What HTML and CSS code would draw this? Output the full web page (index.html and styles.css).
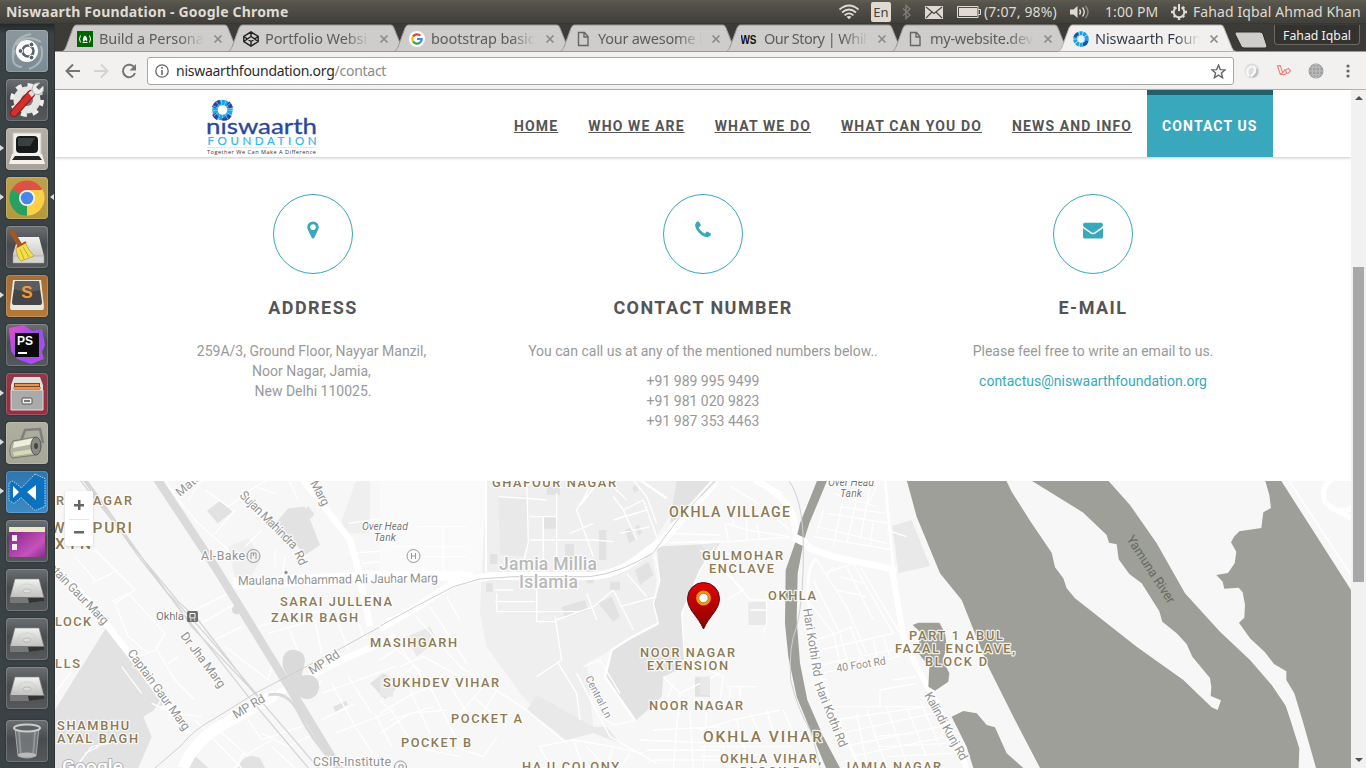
FILE: index.html
```html
<!DOCTYPE html>
<html lang="en">
<head>
<meta charset="utf-8">
<title>Niswaarth Foundation</title>
<link rel="stylesheet" href="styles.css">
</head>
<body>
<svg class="defs" width="0" height="0" aria-hidden="true">
  <defs>
    <linearGradient id="disk" x1="0" y1="0" x2="0" y2="1"><stop offset="0" stop-color="#f2f2f0"/><stop offset="1" stop-color="#bdbdba"/></linearGradient>
    <linearGradient id="purple" x1="0" y1="0" x2="1" y2="1"><stop offset="0" stop-color="#7d1f80"/><stop offset=".7" stop-color="#c552bb"/><stop offset="1" stop-color="#8c2a8a"/></linearGradient>
    <linearGradient id="storm" x1="0" y1="0" x2="1" y2="1"><stop offset="0" stop-color="#e84fc0"/><stop offset=".5" stop-color="#9a4ff0"/><stop offset="1" stop-color="#b44df0"/></linearGradient>
    <linearGradient id="pin" x1="0" y1="0" x2="0" y2="1"><stop offset="0" stop-color="#e00505"/><stop offset="1" stop-color="#8b0000"/></linearGradient>
    <symbol id="close" viewBox="0 0 10 10"><path d="M1.500 1.500l7 7m0-7l-7 7" fill="none" stroke="#8a8a88" stroke-width="1.700"/></symbol>
    <symbol id="doc" viewBox="0 0 16 16"><path d="M3.500 1.500h6l3.500 4v9h-9.500zM9 1.500v4.500h4" fill="none" stroke="#666" stroke-width="1.400"/></symbol>
    <symbol id="drive" viewBox="0 0 42 42">
      <path d="M9 10h24l5 19H4z" fill="url(#disk)" stroke="#888" stroke-width=".6"/>
      <path d="M4 28h34v4l-14 2H4z" fill="#777"/><path d="M22 29h16v3l-15 2z" fill="#333"/>
      <ellipse cx="21" cy="21" rx="9" ry="6" fill="none" stroke="#d0d0ce"/><ellipse cx="21" cy="22" rx="4" ry="2" fill="#dcdcdc" stroke="#b0b0b0" stroke-width=".7"/>
    </symbol>
    <symbol id="tabshape" viewBox="0 0 180 28">
      <path class="tab-fill" d="M0 27.500C2 27 3 25 4 23L11 4Q12.500 1 14 1H163Q165 1 166 4L174 24Q175.500 27.500 178 27.500z"/>
    </symbol>
  </defs>
</svg>

<div class="desktop">
  <header class="panel">
    <span class="window-title">Niswaarth Foundation - Google Chrome</span>
    <div class="tray">
      <svg class="t-wifi" width="22" height="16" viewBox="0 0 22 16"><g fill="none" stroke="#dfdbd2" stroke-width="1.700"><path d="M1.500 5.500Q11-2.500 20.500 5.500"/><path d="M4 8.500Q11 2.500 18 8.500"/><path d="M6.500 11.300Q11 7.500 15.500 11.300"/></g><path d="M8.500 12.800Q11 11 13.500 12.800L11 15.300z" fill="#dfdbd2"/></svg>
      <span class="t-lang">En</span>
      <svg class="t-bt" width="9" height="16" viewBox="0 0 9 16"><path d="M1 4.500l7 6.500-4 3.500V1.500l4 3.500-7 6.500" fill="none" stroke="#7f7d76" stroke-width="1.400"/></svg>
      <svg class="t-mail" width="18" height="13" viewBox="0 0 18 13"><path fill="#dfdbd2" d="M0 0h18v13H0z"/><path d="M1 1l8 6.500L17 1M1 12l6-6m10 6l-6-6" stroke="#4b4943" stroke-width="1.200" fill="none"/></svg>
      <svg class="t-bat" width="24" height="12" viewBox="0 0 24 12"><path d="M.5.500h20.500v11H.500zM21 3.500h2.500v5H21" fill="none" stroke="#dfdbd2"/><path fill="#dfdbd2" d="M2 2h18v8H2z"/></svg>
      <span class="t-pct">(7:07, 98%)</span>
      <svg class="t-snd" width="20" height="14" viewBox="0 0 20 14"><path fill="#dfdbd2" d="M0 4.500h3.500L7.500 1v12L3.500 9.500H0z"/><g fill="none" stroke-width="1.400"><path stroke="#dfdbd2" d="M9.500 4.500q2 2.500 0 5M12.500 2.500q3.500 4.500 0 9"/><path stroke="#8d8a83" d="M15.500 1q5 6 0 12"/></g></svg>
      <span class="t-time">1:00 PM</span>
      <svg class="t-gear" width="16" height="16" viewBox="0 0 16 16"><path d="M5.500 3.300a5.300 5.300 0 1 0 5 0M8 0v7" fill="none" stroke="#dfdbd2" stroke-width="2"/><path d="M2.800 2.800l1.500 1.500M13.200 2.800l-1.500 1.500M0 8h2M14 8h2M2.800 13.200l1.500-1.500M13.200 13.200l-1.500-1.500M8 16v-2" stroke="#dfdbd2" stroke-width="2.400"/></svg>
      <span class="t-user">Fahad Iqbal Ahmad Khan</span>
    </div>
  </header>

  <div class="workspace">
    <nav class="launcher">
      <div class="tile t-dash"><svg viewBox="0 0 42 42"><g fill="none" stroke="#c5cdd0" stroke-opacity=".6"><path d="M7 30Q4 8 25 4M10 15Q20 3 35 12M35 16q5 17-12 23M16 37Q3 36 9 20" stroke-width="2"/></g><circle cx="21" cy="21" r="11" fill="#fff"/><circle cx="22" cy="21" r="5.500" fill="none" stroke="#59636a" stroke-width="2.600"/><g fill="#59636a" stroke="#fff"><circle cx="14.500" cy="21" r="2.400"/><circle cx="25.500" cy="14.500" r="2.400"/><circle cx="25.500" cy="27.500" r="2.400"/></g></svg></div>
      <div class="tile"><svg viewBox="0 0 42 42"><circle cx="21" cy="21" r="14.500" fill="none" stroke="#eee" stroke-width="5" stroke-dasharray="5.700 5.700"/><circle cx="21" cy="21" r="13.500" fill="#e5e5e3"/><circle cx="21" cy="21" r="6" fill="#777"/><path d="M8 34L25 15" stroke="#8e1717" stroke-width="8" stroke-linecap="round"/><path d="M8 34L25 15" stroke="#d3302d" stroke-width="6" stroke-linecap="round"/><path d="M24 16l7-6" stroke="#ddd" stroke-width="5"/><path d="M34 4q-8-1-8 7 2 6 8 4 5-2 3-8l-4 4-3-3z" fill="#eee" stroke="#aaa"/></svg></div>
      <div class="tile t-term running"><svg viewBox="0 0 42 42"><path d="M7 5h28v22H7z" fill="#f3f1e9" stroke="#c9c7be"/><rect x="10" y="8" width="22" height="17" rx="4" fill="#161a1b"/><path d="M12 10h17l-5 8H12z" fill="#394041"/><path d="M6 26h30l3 10H3z" fill="#f4f1e9"/><path d="M9 28h24l3 4H6z" fill="#242424"/></svg></div>
      <div class="tile t-chrome running focused"><svg viewBox="0 0 42 42"><path d="M21 21L5.800 12.300A17.500 17.500 0 0 1 36.200 12.300z" fill="#dd5147"/><path d="M21 21L36.200 12.300A17.500 17.500 0 0 1 21 38.500z" fill="#fdcf46"/><path d="M21 21L21 38.500A17.500 17.500 0 0 1 5.800 12.300z" fill="#27a062"/><path d="M21 13h15.500L29 24z" fill="#fdcf46"/><path d="M14 25l7 4-5 9q-4-1-6-3z" fill="#27a062"/><circle cx="21" cy="21" r="8" fill="#f7f7f7"/><circle cx="21" cy="21" r="6.300" fill="#4a86ea"/></svg></div>
      <div class="tile"><svg viewBox="0 0 42 42"><path d="M12 11h21l5 19v7H7v-9z" fill="url(#disk)"/><path d="M7 30h31v7H7z" fill="#d4d4d2" stroke="#999" stroke-width=".5"/><path d="M6 6l9 15" stroke="#9b5b22" stroke-width="5" stroke-linecap="round"/><path d="M10 22l9-6q3 8 9 14l-13 5q-4-3-5-13z" fill="#f3df4d" stroke="#b39820" stroke-width=".7"/><path d="M11 21l9-5" stroke="#c63b22" stroke-width="2"/><path d="M14 23l4 10m-1-12l6 10" stroke="#c8ad24"/></svg></div>
      <div class="tile t-subl running"><svg viewBox="0 0 42 42"><path d="M7 5h28l3 27q0 3-2 3H6q-2 0-2-3z" fill="#e9e5df"/><path d="M9 6h24l3 21q0 3-2 3H8q-2 0-2-3z" fill="#454545"/><path d="M9 6h24l1 9Q22 19 8 14z" fill="#5d5d5d"/><text x="21" y="23" class="s-mark">S</text></svg></div>
      <div class="tile"><svg viewBox="0 0 42 42"><path d="M3 4l15-3 8 6 10-2 3 16-3 7 2 7-13 5-14-5-6-8z" fill="url(#storm)"/><path d="M9 9h24v24H9z" fill="#0b0b0b"/><text x="11" y="21" class="ps-mark">PS</text><path d="M12 28h9v2h-9z" fill="#fff"/></svg></div>
      <div class="tile t-files running"><svg viewBox="0 0 42 42"><path d="M8 4h26l3 8v24H5V12z" fill="#dededc"/><path d="M8 10h26v7H8z" fill="#78452b"/><path d="M9 11h24v2H9zM7 14h28v2H7z" fill="#e9914e"/><path d="M5 17h32v20H5z" fill="#aaa" stroke="#ddd"/><rect x="16" y="25" width="10" height="6" rx="1" fill="#eee" stroke="#555"/><path d="M18 27h6v2h-6z" fill="#777"/></svg></div>
      <div class="tile t-tweak running"><svg viewBox="0 0 42 42"><path d="M15 19l4-11 15-1 3 14" fill="none" stroke="#7d807c" stroke-width="2.500"/><path d="M7 19l22-4q-3 12 1 18l-24 3q-5-8 1-17z" fill="#b2b3a2" stroke="#7b7b6a"/><path d="M8 20l20-4-1 6-20 4z" fill="#eeeedd"/><path d="M7 30l20-3 1 4-20 3z" fill="#d8d9b8"/><ellipse cx="30" cy="24" rx="5" ry="9" fill="#888a86" stroke="#555"/><ellipse cx="30" cy="24" rx="2" ry="3" fill="#444"/></svg></div>
      <div class="tile t-code running"><svg viewBox="0 0 42 42"><path d="M29 3l10 4.500v28L29 39.500 15 26.500l-7 6-5-3v-18l4-1.500 8.500 7z" fill="#0a72bf" stroke="#d9e8f2" stroke-width=".8" stroke-dasharray="1.500 1"/><path d="M30 14v15l-9-8zM7 15v12l6-6z" fill="#fff"/></svg></div>
      <div class="tile"><svg viewBox="0 0 42 42"><rect x="3" y="7" width="36" height="30" rx="2" fill="url(#purple)"/><path d="M3 7h36v5H3z" fill="#eae7cb"/><path d="M6 15h5v6H6zM6 24h5v6H6z" fill="#f4eef4"/></svg></div>
      <div class="tile"><svg viewBox="0 0 42 42"><use href="#drive"/></svg></div>
      <div class="tile"><svg viewBox="0 0 42 42"><use href="#drive"/></svg></div>
      <div class="tile"><svg viewBox="0 0 42 42"><use href="#drive"/></svg></div>
      <div class="tile t-trash"><svg viewBox="0 0 42 42"><path d="M9 8h24l-3 28q-9 4-18 0z" fill="#8a8e90" fill-opacity=".6" stroke="#b7babb" stroke-width=".8"/><path d="M13 12l2 24M29 12l-2 24" stroke="#a7abac" stroke-opacity=".6" stroke-width="2"/><ellipse cx="21" cy="8" rx="13" ry="3.500" fill="#5b6062" stroke="#ccc" stroke-width="2"/><ellipse cx="21" cy="35" rx="9" ry="2.500" fill="#bbb"/></svg></div>
    </nav>

    <section class="browser">
      <div class="tabstrip">
        <div class="tab"><svg class="tab-bg"><use href="#tabshape"/></svg><svg class="fav" viewBox="0 0 16 16"><path fill="#006400" d="M0 0h16v16H0z"/><path d="M3.500 4.500Q1.500 8 3.500 11.500M12.500 4.500q2 3.500 0 7M5.500 11.500h5" fill="none" stroke="#fff"/><path d="M8 4.500q3 2.500 2 6L8.500 9 7 10.500H6Q5 7 8 4.500z" fill="#fff"/></svg><span class="tab-title">Build a Persona</span><svg class="x"><use href="#close"/></svg></div>
        <div class="tab"><svg class="tab-bg"><use href="#tabshape"/></svg><svg class="fav" viewBox="0 0 16 16"><path d="M8 .8l7.200 4.700v5L8 15.200.8 10.500v-5zM8 .8v4.700M8 15.200v-4.700M.8 5.500L8 10.500l7.200-5M.8 10.500L8 5.500l7.200 5" fill="none" stroke="#222" stroke-width="1.400"/></svg><span class="tab-title">Portfolio Websi</span><svg class="x"><use href="#close"/></svg></div>
        <div class="tab"><svg class="tab-bg"><use href="#tabshape"/></svg><svg class="fav" viewBox="0 0 16 16"><circle cx="8" cy="8" r="8" fill="#fff"/><g fill="none" stroke-width="2.200"><path d="M11.300 4.700A4.700 4.700 0 0 0 4 5.600" stroke="#ea4335"/><path d="M4 5.600a4.700 4.700 0 0 0 0 4.800" stroke="#fbbc05"/><path d="M4 10.400a4.700 4.700 0 0 0 7 1.200" stroke="#34a853"/><path d="M11 11.600Q12.700 10 12.700 8H8" stroke="#4285f4"/></g></svg><span class="tab-title">bootstrap basic</span><svg class="x"><use href="#close"/></svg></div>
        <div class="tab"><svg class="tab-bg"><use href="#tabshape"/></svg><svg class="fav"><use href="#doc"/></svg><span class="tab-title narrow">Your awesome l</span><svg class="x"><use href="#close"/></svg></div>
        <div class="tab"><svg class="tab-bg"><use href="#tabshape"/></svg><svg class="fav" viewBox="0 0 16 16"><text x="-.5" y="12.500" class="ws" textLength="16" lengthAdjust="spacingAndGlyphs">WS</text></svg><span class="tab-title story">Our Story | Whil</span><svg class="x"><use href="#close"/></svg></div>
        <div class="tab"><svg class="tab-bg"><use href="#tabshape"/></svg><svg class="fav"><use href="#doc"/></svg><span class="tab-title narrow">my-website.dev</span><svg class="x"><use href="#close"/></svg></div>
        <div class="tab active"><svg class="tab-bg"><use href="#tabshape"/></svg><svg class="fav" viewBox="0 0 16 16"><circle cx="8" cy="8" r="5.800" fill="#e3f4fc" stroke="#1d9ee8" stroke-width="4" stroke-dasharray="3 .6"/><path d="M2 6a6 6 0 0 1 3-3.500M14 10a6 6 0 0 1-4 4" stroke="#1f4fa3" stroke-width="3" fill="none"/></svg><span class="tab-title">Niswaarth Foun</span><svg class="x"><use href="#close"/></svg></div>
        <svg class="newtab" width="34" height="18" viewBox="0 0 34 18"><path d="M2 1h24q2 0 3 2l4 12q0 2-2 2H10q-2 0-3-2L1 3q0-2 1-2z" fill="#cfcdcb" stroke="#2c2b28" stroke-width="1"/></svg>
        <span class="profile">Fahad Iqbal</span>
      </div>

      <div class="toolbar">
        <svg class="tb" viewBox="0 0 16 16"><path d="M15 8H2M8 1.500L1.500 8 8 14.500" fill="none" stroke="#757575" stroke-width="2"/></svg>
        <svg class="tb" viewBox="0 0 16 16"><path d="M1 8h13M8 1.500L14.500 8 8 14.500" fill="none" stroke="#d4d3d2" stroke-width="2"/></svg>
        <svg class="tb" viewBox="0 0 16 16"><path d="M13.600 5A6.200 6.200 0 1 0 14 10" fill="none" stroke="#757575" stroke-width="2"/><path d="M15 1v6.500H8.500z" fill="#757575"/></svg>
        <div class="omnibox">
          <svg class="info" viewBox="0 0 14 14"><circle cx="7" cy="7" r="6.200" fill="none" stroke="#666" stroke-width="1.300"/><path d="M7 6v5M7 3v1.700" stroke="#666" stroke-width="1.600"/></svg>
          <span class="url">niswaarthfoundation.org<span class="path">/contact</span></span>
          <svg class="star" viewBox="0 0 14 14"><path d="M7 1l1.700 4.200 4.500.3-3.500 2.900 1.100 4.400L7 10.400l-3.800 2.400 1.100-4.400L.8 5.500l4.500-.3z" fill="none" stroke="#666" stroke-width="1.300"/></svg>
        </div>
        <div class="exts">
          <svg width="16" height="16" viewBox="0 0 16 16"><circle cx="8" cy="8" r="7.500" fill="#dcdcdc"/><path d="M9 3q5 5-2 10M5 13Q0 7 8 3" stroke="#f7f7f7" stroke-width="2.500" fill="none"/><path d="M9 14q5-2 4-8" stroke="#bbb" stroke-width="1.500" fill="none"/></svg>
          <svg width="16" height="12" viewBox="0 0 17 14"><path d="M1 1l3-.5L7 9l-3 1.500zM4 10.500q5 2 8-1L10 6l4-2 2 3-3 3M7 9l3-4" fill="none" stroke="#f4766b" stroke-width="1.200"/></svg>
          <svg width="16" height="16" viewBox="0 0 17 17"><circle cx="8.500" cy="8.500" r="8" fill="#a0a0a0"/><path d="M1 8.500h15M8.500 1v15M2.500 4.500h12M2.500 12.500h12" stroke="#c0c0c0" fill="none"/><ellipse cx="8.500" cy="8.500" rx="4" ry="7.500" fill="none" stroke="#c0c0c0"/></svg>
          <svg class="dots" width="4" height="14" viewBox="0 0 4 14"><g fill="#666"><circle cx="2" cy="2" r="1.600"/><circle cx="2" cy="7" r="1.600"/><circle cx="2" cy="12" r="1.600"/></g></svg>
        </div>
      </div>

      <div class="viewport">
        <main class="page">
          <div class="site-header">
            <svg class="logo" width="114" height="60" viewBox="205 97 114 60">
              <circle cx="222.500" cy="110" r="7.600" fill="none" stroke="#1ea7e8" stroke-width="5.500"/>
              <path d="M214 107.500a8.500 8.500 0 0 1 6-5.700M228 103a9 9 0 0 1 3 5M230 115a9 9 0 0 1-5 4M214 114a9 9 0 0 0 4 4.500" fill="none" stroke="#28489b" stroke-width="4.200"/>
              <circle cx="222.500" cy="110" r="7.600" fill="none" stroke="#fff" stroke-opacity=".6" stroke-width="5.500" stroke-dasharray=".6 3.200"/>
              <text x="206" y="134" class="lg-name" textLength="111" lengthAdjust="spacingAndGlyphs">niswaarth</text>
              <text x="207.500" y="144.800" class="lg-sub" textLength="109">FOUNDATION</text>
              <path d="M207 147.500h109" stroke="#dfeaf3"/>
              <text x="207" y="153.500" class="lg-tag" textLength="109">Together We Can Make A Difference</text>
            </svg>
            <nav class="menu">
              <a href="#">HOME</a><a href="#">WHO WE ARE</a><a href="#">WHAT WE DO</a><a href="#">WHAT CAN YOU DO</a><a href="#">NEWS AND INFO</a><a href="#" class="current">CONTACT US</a>
            </nav>
          </div>

          <section class="contacts">
            <article class="card">
              <div class="ring"><svg width="20" height="20" viewBox="0 0 1792 1792"><path d="M1152 640q0-106-75-181t-181-75-181 75-75 181 75 181 181 75 181-75 75-181zm256 0q0 109-33 179l-364 774q-16 33-47.500 52t-67.500 19-67.500-19-46.500-52l-365-774q-33-70-33-179 0-212 150-362t362-150 362 150 150 362z"/></svg></div>
              <h4>ADDRESS</h4>
              <p><span class="hang">259A/3, Ground Floor, Nayyar Manzil,</span><br><span class="hang">Noor Nagar, Jamia,</span><br>New Delhi 110025.</p>
            </article>
            <article class="card">
              <div class="ring"><svg width="20" height="20" viewBox="0 0 1792 1792"><path d="M1600 1240q0 27-10 70.500t-21 68.500q-21 50-122 106-94 51-186 51-27 0-53-3.500t-57.500-12.500-47-14.500-55.500-20.500-49-18q-98-35-175-83-127-79-264-216t-216-264q-48-77-83-175-3-9-18-49t-20.500-55.500-14.500-47-12.500-57.500-3.500-53q0-92 51-186 56-101 106-122 25-11 68.500-21t70.500-10q14 0 21 3 18 6 53 76 11 19 30 54t35 63.500 31 53.500q3 4 17.500 25t21.500 35.500 7 28.500q0 20-28.500 50t-62 55-62 53-28.500 46q0 9 5 22.500t8.500 20.500 14 24 11.500 19q76 137 174 235t235 174q2 1 19 11.500t24 14 20.500 8.500 22.500 5q18 0 46-28.500t53-62 55-62 50-28.500q14 0 28.500 7t35.500 21.500 25 17.500q25 15 53.500 31t63.500 35 54 30q70 35 76 53 3 7 3 21z"/></svg></div>
              <h4>CONTACT NUMBER</h4>
              <p>You can call us at any of the mentioned numbers below..</p>
              <p>+91 989 995 9499<br>+91 981 020 9823<br>+91 987 353 4463</p>
            </article>
            <article class="card">
              <div class="ring"><svg width="20" height="20" viewBox="0 0 1792 1792"><path d="M1792 710v794q0 66-47 113t-113 47h-1472q-66 0-113-47t-47-113v-794q44 49 101 87 362 246 497 345 57 42 92.500 65.500t94.500 48 110 24.500h2q51 0 110-24.500t94.500-48 92.500-65.500q170-123 498-345 57-39 100-87zm0-294q0 79-49 151t-122 123q-376 261-468 325-10 7-42.500 31t-54 38.500-52 32.500-57.500 27-50 9h-2q-23 0-50-9t-57.500-27-52-32.500-54-38.500-42.500-31q-91-64-262-182.500t-205-142.500q-62-42-117-115.500t-55-136.500q0-78 41.500-130t118.500-52h1472q65 0 112.500 47t47.500 113z"/></svg></div>
              <h4>E-MAIL</h4>
              <p>Please feel free to write an email to us.</p>
              <p><a href="#">contactus@niswaarthfoundation.org</a></p>
            </article>
          </section>

          <div class="map">
            <svg width="1296" height="287" viewBox="55 481 1296 287">
              <!-- west: rail corridor, ring road, parks -->
              <g transform="translate(55 480) scale(.33333)">
                <path class="park" d="M155 440L320 640 330 670 265 710 290 770 250 864H0V690zM495 62L532 95 488 130 456 92zM700 85L750 80 795 195 750 225 665 125zM760 78l18 25-12 14-18-25zM945 610l40-30 35 20v30l-30 28zM835 680l38-18 6 12-38 22zM380 864q10-40 30-46l50 46zM550 864q15-50 65-30l15 30z"/>
                <path class="campus" d="M905 0h40v160H870l-10-40zM520 200l60-25 40 60-30 50-50 10z"/>
                <path class="minor" d="M0 130L120 210 240 330 180 370 220 470 280 520M170 365L220 340 330 460 300 510 250 530M110 310L190 270M60 230L120 300M330 0L370 60 430 130 520 210M440 0L400 60M450 30L520 80 600 20M540 90L480 160M590 60L690 160 720 230M620 150L570 200M660 40L600 20 640 0M700 0L730 60M400 400L520 340M440 430L560 360M480 480L560 440M510 500L640 600M560 400L640 520 660 570M640 600L650 560M610 440L760 400 900 370M640 460L780 420M780 420L800 520M700 440L740 540M850 430L880 510M900 400L930 480M660 260V210M680 300L690 230M340 550L370 530M200 560L260 640M300 500L360 600 420 660M290 670L360 700 440 710M380 710L370 740M330 640L300 690M0 640L60 560M0 560L50 540M800 640L1020 560M830 610L900 740M880 590L950 700M800 720L900 670M840 760L1020 690M900 740L960 830M960 700L1010 800M780 640L800 600M420 720L560 864M480 740L580 830M560 690L620 780 740 740M570 815L540 864M580 820L650 780M620 760L700 800 780 760M650 800L720 864M880 130L1020 110M880 220L1020 210M920 250L1020 240M60 864L110 800 160 790M90 820L130 800"/>
                <path class="road" stroke-width="20" d="M0 265Q60 310 120 390L230 530 400 760"/>
                <path class="road" stroke-width="34" d="M535 310L1020 288"/>
                <path class="road" stroke-width="20" d="M745 0L885 180 910 270 945 440"/>
                <path class="road" stroke-width="34" d="M385 864Q420 775 520 725L660 645"/>
                <path class="road" stroke-width="20" d="M650 650L840 550 1020 470"/>
                <path class="rail" d="M75 0L250 220 370 365 430 420 590 630 790 864M85 0L255 235 580 650 760 864M90 0L310 300 410 440 600 640M95 0L330 330 450 460 620 660"/>
                <path class="ring-rd" d="M305 -5L480 260 640 520 720 650 860 880"/>
                <path class="loop" d="M640 645Q700 630 735 705T850 864"/>
                <path class="loopf" d="M683 545q0-36 34-36 34 4 33 34l-10 44 20-3q32 4 33 36-6 38-40 37-22-2-34-26l-25-50q-12-14-11-36zM545 375a14 14 0 1 0 .1 0z"/>
                <path class="edge" d="M300 864L380 795Q420 745 480 715L600 640 830 520 1020 416"/>
              </g>
              <!-- centre: university campus and village -->
              <g transform="translate(380 480) scale(.33333)">
                <path class="pale" d="M0 0H318V275H0z"/>
                <path class="campus" d="M320 0H890L900 60 810 200 830 300 820 370 835 430 750 475 695 510 620 550 640 740 550 780 420 640 320 500 300 400z"/>
                <path class="park" d="M890 0H1000L930 90 870 130zM830 200L1020 190 960 270 905 400 915 560 850 590 845 650 770 720 675 590 695 510 750 475 835 430 820 370 840 300zM490 108h37v38h-37zM555 192h27v55h-27zM657 150h22v90h-22zM620 250h22v60h-22zM765 270l40-25 15 40-40 30zM655 370l40-20 25 60-20 15zM545 380l70-20 10 30-70 25zM690 305h30v26h-30zM330 222h22v30h-22zM318 310h20v25h-20zM500 20h40v25h-40zM765 15l12 15-14 8-6-14zM735 150l20-10 12 40-20 10zM765 140l12-6 10 24-12 8zM945 590h45v60h-45z"/>
                <path class="park2" d="M355 52L440 48 446 185 430 230 360 225zM470 645L440 690 560 780 640 760 720 790 680 740 640 740zM80 470L150 440 170 480 110 530zM0 590l40 20v40H0z"/>
                <path class="minor" d="M440 0L445 185 430 250M530 40V280M450 110H530M355 50L440 55 500 60M490 108V240M450 180H640L700 185M570 160L640 130M600 70L590 90 640 230M600 75L640 0M700 50L730 90 790 60 830 170M730 90L770 180M700 120L800 90M720 160L810 140M760 0L800 50 830 130M680 0L740 60M350 340V395H600M345 365H465M470 330V425H530M345 330H400M525 410L545 540 470 590M535 550L590 640 600 720M530 420L640 380 700 330M620 340L650 420M700 330L760 450M740 280L800 350M720 380L830 350M610 560L660 540 720 640M590 580L690 770 830 850M695 510L675 590 765 722M765 722L700 735 680 720M825 230L840 300 820 370 835 430 750 475 695 510M1010 190L960 270 905 400 915 560M870 160L1020 165M0 540L60 500 160 640M20 480L150 600 210 580M60 560L130 530 260 600M100 400L240 560M150 380L260 550M200 350L240 420M20 620L100 560M0 700L100 640 250 590M30 720L160 680M0 760L90 700 200 690M90 630L150 760M150 620L230 780M200 600L280 730M240 560L440 690 560 790M280 650L380 740M310 620L240 700M350 630L290 730M100 800L240 830M220 800L310 830 350 770M0 660L40 700 90 780M60 230H260M30 200H260M110 140H260M190 140V280M130 240V280M475 800L580 780 700 800 790 820M480 800L500 840M580 780L610 864M620 800L680 864M700 800L680 864M750 820L720 864M780 780L1020 790M800 810H1020M820 840H1020M850 590L900 640 1020 580M880 610L860 660 900 700M900 640L890 740 880 864M930 700L940 864M980 680L970 864M820 750L1020 740"/>
                <path class="road" stroke-width="7" d="M660 0L600 75M780 0L860 55M835 430L750 475 695 510 675 590 765 722"/>
                <path class="road" stroke-width="30" d="M0 288H180L280 290"/>
                <path class="road" stroke-width="24" d="M0 445L120 375 230 305 330 288H630Q720 285 800 215L850 180 1010 0"/>
                <path class="edge" d="M0 438L110 378 220 320 300 297 400 290H630Q720 280 820 218L900 110 1010 0"/>
                <path class="road" stroke-width="6" d="M870 188L1020 184M318 0V275"/>
              </g>
              <!-- east: canal, enclave, ponds -->
              <g transform="translate(700 480) scale(.33333)">
                <path class="park2" d="M577 137L635 120 690 258 595 280zM145 365h55v70h-55zM0 590h30v55H0zM0 190l55 0-35 30z"/>
                <path class="minor" d="M80 130L140 150 270 170M75 130L85 180M100 60V140M140 110V180M170 130L180 180M0 190L270 172M0 210L70 270 130 330 80 360M60 240L100 300 150 360H200V430M150 390H200M200 430L190 460M90 20L160 60 270 150M180 0L250 40M400 40L530 80M380 100L570 130M350 140L560 190M370 90L350 160M430 50L400 200M470 60L440 190M510 20L480 180M540 0L500 80M520 120L510 200M560 150L620 170M340 170L580 210M420 80L560 100M350 240L440 380 500 520M370 280L460 250 580 460M400 260L380 290M440 260L520 420M480 260L600 460M340 300L420 460 440 540M330 370L400 460M420 290L490 310M410 330L500 350M350 480L460 440M360 510L580 460M400 460L420 550M450 440L490 540M340 560L620 500M360 580L560 540 620 520M520 480L540 560M550 470L570 530M540 630L650 610M540 630V680M580 600L650 590M380 680H660M400 720L680 680M420 760L700 700M430 800L720 740M450 830L740 770M500 690L560 864M560 680L620 850M620 680L680 830M660 660L720 800M470 700L500 850M520 770L640 760M0 560L70 590 60 660M80 620H170M90 625V680M120 620V680M0 750L100 720 240 690M150 700L180 760M200 690L220 760M250 690L280 760M60 740L80 864M110 720L150 864M0 800H280M0 830L310 820M380 600L350 580M540 800L740 790M560 830L760 820"/>
                <path class="road" stroke-width="20" d="M165 0Q260 50 280 110L290 165 330 205 400 230 590 270"/>
                <path class="road" stroke-width="18" d="M575 265L595 380 610 470 650 560 700 650 800 864"/>
                <path class="road" stroke-width="8" d="M555 0L580 265M350 235Q320 260 325 340L330 500 400 690 480 864"/>
                <path class="water" d="M352 0H382L328 130 312 180 293 280 290 420 300 550 322 660 370 770 420 864H378L335 760 290 650 265 530 255 430 257 270 285 190 300 130z"/>
                <path class="road" stroke-width="24" d="M278 170L320 190"/>
                <path class="edge" d="M265 0Q310 60 310 200 312 350 290 440 265 500 272 600 290 680 330 750 345 790 360 864M0 50L45 0"/>
                <path class="water" d="M638 435L655 428 718 428 735 458 740 500 728 540 748 580 745 605 705 632 685 620 688 560 655 520 660 455zM755 710L790 693 830 700 860 735 885 742 920 820 970 864H820L800 800z"/>
                <path class="water" d="M620 0L650 110 720 280 785 360 865 560 945 720 1020 864H2100V0z"/>
              </g>
              <!-- river islands and far bank -->
              <g transform="translate(1030 480) scale(.33333)">
                <path class="land" d="M-72 0H0L10 5 160 98 230 165 237 188 260 193 266 238 298 282 335 310 388 394 397 425 440 460 470 492 487 530 540 594 544 622 542 648 573 661 563 690 545 682 460 600 320 500 135 355 110 325 100 295 75 262 65 218 0 122-55 35zM233 0L300 75 380 190 465 340 570 455 660 540 725 615 767 677 782 722 808 805 806 864H858L820 730 793 640 769 600V574L732 552 705 517 660 475 627 428 643 413 645 375 638 337 626 323 583 326 578 305 559 285 594 279 614 250 619 215 603 187 612 170 628 154 694 144 700 97 723 84 718 45 705 0zM752 0L963 330V0zM0 810L27 864H0z"/>
                <path class="road" stroke-width="5" d="M775 0L963 285"/>
                <path class="road" stroke-width="16" d="M905 0Q870 20 885 65 920 105 965 85M900 80L965 115"/>
              </g>

              <g class="brown" transform="translate(0 -.3)">
                <text x="56" y="505.500">R</text><text x="93" y="505.500" textLength="39">AGAR</text>
                <text x="51" y="533.500" class="b15">W</text><text x="92.500" y="533.500" class="b15" textLength="39.500">PURI</text>
                <text x="55" y="549.500" class="b15" textLength="36">XTN</text>
                <text x="55" y="626.500" textLength="36">LOCK</text>
                <text x="55" y="668.500" textLength="25">LLS</text>
                <text x="57" y="730.500" textLength="72">SHAMBHU</text><text x="57" y="743.500" textLength="81">AYAL BAGH</text>
                <text x="280" y="606.500" textLength="112">SARAI JULLENA</text><text x="271" y="622.500" textLength="87">ZAKIR BAGH</text>
                <text x="370" y="647.500" textLength="87">MASIHGARH</text>
                <text x="383" y="687.500" textLength="116">SUKHDEV VIHAR</text>
                <text x="451" y="723.500" textLength="71">POCKET A</text><text x="401" y="747.500" textLength="70">POCKET B</text>
                <text x="492" y="487.500" textLength="124">GHAFOUR NAGAR</text>
                <text x="522" y="771.500" textLength="97">HAJI COLONY</text>
                <text x="669" y="517.500" class="b14" textLength="121">OKHLA VILLAGE</text>
                <text x="702" y="560.500" textLength="81">GULMOHAR</text><text x="709" y="573.500" textLength="65">ENCLAVE</text>
                <text x="768" y="600.500" textLength="48">OKHLA</text>
                <text x="640" y="657.500" textLength="95">NOOR NAGAR</text><text x="647" y="670.500" textLength="81">EXTENSION</text>
                <text x="649" y="710.500" textLength="94">NOOR NAGAR</text>
                <text x="703" y="742.500" class="b15" textLength="119">OKHLA VIHAR</text>
                <text x="720" y="763.500" textLength="101">OKHLA VIHAR,</text><text x="740" y="776" textLength="61">BLOCK D</text>
                <text x="843" y="771.500" textLength="98">JAMIA NAGAR</text>
                <text x="909" y="640.500" textLength="94">PART 1 ABUL</text><text x="895" y="653.500" textLength="120">FAZAL ENCLAVE,</text><text x="925" y="666.500" textLength="62">BLOCK D</text>
              </g>
              <g class="grey">
                <text x="201" y="559.500" textLength="44">Al-Bake</text>
                <text x="238" y="585" textLength="200" transform="rotate(-.8 238 585)">Maulana Mohammad Ali Jauhar Marg</text>
                <text x="156" y="620" class="dk" textLength="28">Okhla</text>
                <text x="313" y="765.500" textLength="78">CSIR-Institute</text>
                <text transform="translate(180 497) rotate(-40)">Mate</text>
                <text transform="translate(239 496) rotate(45)" textLength="76">Sujan Mahindra</text><text transform="translate(294 553) rotate(66)">Rd</text>
                <text transform="translate(310 483) rotate(62)" textLength="27">Marg</text>
                <text transform="translate(48 568) rotate(46)" textLength="80">ptain Gaur Marg</text>
                <text transform="translate(127 653) rotate(54)" textLength="97">Captain Gaur Marg</text>
                <text transform="translate(180 636) rotate(53)" textLength="66">Dr Jha Marg</text>
                <text transform="translate(236 719) rotate(-31)" textLength="35">MP Rd</text><text transform="translate(312 675) rotate(-33)" textLength="34">MP Rd</text>
                <text transform="translate(585 678) rotate(63)" class="s10" textLength="46">Central Ln</text>
                <text transform="translate(803 609) rotate(81)" textLength="69">Hari Kothi Rd</text><text transform="translate(814 684) rotate(68)" textLength="69">Hari Kothi Rd</text>
                <text transform="translate(837 672) rotate(-9)" class="s11" textLength="50">40 Foot Rd</text>
                <text transform="translate(924 695) rotate(61)" textLength="76">Kalindi Kunj Rd</text>
                <text transform="translate(1126 539) rotate(57)" class="river" textLength="78">Yamuna River</text>
                <text x="499" y="570" class="uni" textLength="98">Jamia Millia</text><text x="519" y="588" class="uni" textLength="59">Islamia</text>
              </g>
              <g class="ital">
                <text x="362" y="529.500" textLength="46">Over Head</text><text x="374" y="541" textLength="22">Tank</text>
                <text x="828" y="485.500" textLength="46">Over Head</text><text x="840" y="497" textLength="22">Tank</text>
              </g>
              <g class="poi">
                <circle cx="253.500" cy="556" r="6.500"/><path d="M251 553v6M253.500 553v3M256 553v6M251 553h5"/>
                <circle cx="413.500" cy="556" r="6.500"/><path d="M411.500 553v6M415.500 553v6M411.500 556h4"/>
                <circle cx="400.500" cy="767" r="6"/><path d="M399 765h4v4h-4z"/>
                <circle cx="286" cy="572.500" r="1.300" fill="#888"/>
              </g>
              <rect x="187" y="611" width="11" height="11" rx="1.500" fill="#6f6f6f"/><path d="M190 613.500h5v4.500h-5zM190 620h1.500M194 620h1.500" fill="none" stroke="#fff"/>
              <text x="62" y="773" class="goog" textLength="61">Google</text>
              <path d="M703.500 629C698 616 687.500 610 687.500 598.500A16 16 0 0 1 719.500 598.500C719.500 610 709 616 703.500 629z" fill="url(#pin)" stroke="#521010"/>
              <circle cx="703.500" cy="598" r="6" fill="#fff" stroke="#f39a0b" stroke-width="2.800"/><circle cx="703.500" cy="598" r="4.700" fill="none" stroke="#8d5a22" stroke-width=".6"/>
            </svg>
            <div class="zoom"><button class="zbtn plus"></button><button class="zbtn"></button></div>
          </div>
        </main>
        <div class="scrollbar"><span class="arr up"></span><span class="thumb"></span><span class="arr down"></span></div>
      </div>
    </section>
  </div>
</div>
</body>
</html>
```
FILE: styles.css
```css
* { box-sizing: border-box; }
body { margin: 0; overflow: hidden; font-family: Roboto, "Liberation Sans", sans-serif; }
.defs { display: block; position: absolute; }
.desktop { width: 1366px; height: 768px; display: flex; flex-direction: column; overflow: hidden; background: #3c3b37; }
svg { flex: none; display: block; }
text { white-space: pre; }

/* top panel */
.panel { height: 24px; flex: none; display: flex; align-items: center; justify-content: space-between; padding: 0 6px; background: linear-gradient(#5f5c51, #55534b 15%, #403f3a 95%, #33322e); color: #dfdbd2; font: 14.5px/24px "Noto Sans", sans-serif; white-space: nowrap; }
.window-title { font-weight: 700; font-size: 14px; letter-spacing: .19px; }
.tray { display: flex; align-items: center; height: 24px; }
.t-lang { width: 20px; height: 20px; margin: 0 11px; background: #dfdbd2; border-radius: 2px; color: #45433d; font-size: 13px; line-height: 20px; text-align: center; }
.t-mail { margin: 0 14px; }
.t-pct { width: 89px; padding-left: 3px; font-size: 14px; letter-spacing: .15px; }
.t-time { width: 66px; margin-left: 15px; font-size: 14px; letter-spacing: .1px; }
.t-user { width: 167px; margin-left: 6px; font-size: 14px; letter-spacing: .1px; }

/* launcher */
.workspace { flex: 1; display: flex; min-height: 0; }
.launcher { width: 55px; flex: none; padding: 6px 0 0 6px; display: flex; flex-direction: column; gap: 7px; background: linear-gradient(#23282b, #3b4245 10px, #3b4245); border-right: 1px solid #2e3335; }
.tile { position: relative; width: 42px; height: 42px; flex: none; border-radius: 4px; background: linear-gradient(#6b6f71, #484c4e 45%, #55595b); box-shadow: inset 0 0 0 1px rgba(255,255,255,.18), 0 0 2px #222; }
.tile svg { width: 42px; height: 42px; }
.t-dash { background: linear-gradient(#8b979d, #7b8b93); }
.t-term { background: linear-gradient(#b5b0a7, #a7a299); }
.t-chrome { background: linear-gradient(#bfa04b, #b2993e); }
.t-subl { background: linear-gradient(#a56d35, #b57937); }
.t-files { background: linear-gradient(#8f3948, #93303f); }
.t-tweak { background: linear-gradient(#aeafa0, #a6a796); }
.t-code { background: linear-gradient(#2f76ae, #3d8ac5); }
.t-trash { margin-top: 4px; }
.running::before { content: ""; position: absolute; left: -6px; top: 17px; border: 3px solid transparent; border-left: 4px solid #dcdcdc; border-right: 0; }
.focused::after { content: ""; position: absolute; right: -6px; top: 17px; border: 3px solid transparent; border-right: 4px solid #dcdcdc; border-left: 0; }
.s-mark { font: 700 17px "Liberation Sans", sans-serif; fill: #f79a3e; text-anchor: middle; }
.ps-mark { font: 700 12px "Liberation Sans", sans-serif; fill: #fff; }

/* browser chrome */
.browser { flex: 1; display: flex; flex-direction: column; min-width: 0; }
.tabstrip { height: 28px; flex: none; display: flex; padding-left: 7px; background: #3c3b37; font: 14.5px/28px "Noto Sans", sans-serif; border-bottom: 1px solid #999; }
.tab { position: relative; width: 166px; flex: none; display: flex; align-items: center; padding-left: 15px; height: 29px; color: #5c5c5a; z-index: 1; }
.tab.active { z-index: 2; color: #333c4c; }
.tab-bg { position: absolute; left: 0; top: 0; width: 180px; height: 28px; }
.tab-fill { fill: #cfcdcb; stroke: #989795; stroke-width: 1; }
.tab.active .tab-bg { filter: brightness(1.17); }
.fav, .tab-title, .x { position: relative; }
.fav { width: 16px; height: 16px; }
.tab-title { width: 105px; height: 28px; margin: -2px 0 0 6px; overflow: hidden; white-space: nowrap; letter-spacing: -.1px; -webkit-mask-image: linear-gradient(90deg, #000 80px, transparent 105px); mask-image: linear-gradient(90deg, #000 80px, transparent 105px); }
.tab-title.narrow { padding-left: 1px; letter-spacing: -.25px; }
.tab-title.story { padding-left: 1px; letter-spacing: -.55px; }
.x { width: 10px; height: 10px; margin-left: 9px; }
.ws { font: 700 12px "Liberation Sans", sans-serif; fill: #111; }
.newtab { margin: 7px 0 0 10px; }
.profile { width: 86px; height: 20px; margin: 1px 0 0 6px; border: 1px solid #6b6a65; border-top: 0; border-radius: 0 0 4px 4px; background: #33322e; color: #f2f1f0; font-size: 12.3px; line-height: 21px; text-align: center; white-space: nowrap; }
.toolbar { height: 38px; flex: none; display: flex; align-items: center; gap: 12px; padding: 2px 14px 1px 10px; background: #f2f1f0; border-bottom: 1px solid #b6b4b1; }
.tb { width: 16px; height: 16px; }
.omnibox { width: 1087px; height: 28px; margin: 0 0 0 -2px; flex: none; display: flex; align-items: center; padding: 0 7px; border: 1px solid #a8a7a5; border-radius: 3px; background: #fff; font: 14px/26px "Noto Sans", sans-serif; color: #2c2c2c; }
.info { width: 14px; height: 14px; }
.url { flex: 1; margin-left: 7px; letter-spacing: -.26px; }
.path { color: #8a8a8a; }
.star { width: 15px; height: 15px; }
.exts { flex: 1; display: flex; align-items: center; gap: 16px; margin-left: -2px; padding-right: 2px; }
.dots { margin-left: auto; }

/* page */
.viewport { flex: 1; display: flex; min-height: 0; }
.page { width: 1296px; flex: none; display: flex; flex-direction: column; background: #fff; }
.site-header { height: 67px; flex: none; display: flex; justify-content: space-between; padding: 0 78px 0 150px; box-shadow: 0 1px 3px rgba(0,0,0,.22); }
.logo { margin-top: 7px; }
.lg-name { font: 400 22px Lato, sans-serif; fill: #28489b; stroke: #28489b; stroke-width: .3px; }
.lg-sub { font: 400 11.5px Lato, sans-serif; fill: #2cb8f3; stroke: #2cb8f3; stroke-width: .2px; }
.lg-tag { font: 400 5.6px "Open Sans", sans-serif; fill: #333; }
.menu { display: flex; }
.menu a { padding: 0 15px; font-size: 14px; font-weight: 700; line-height: 72px; letter-spacing: 1.13px; color: #555; white-space: nowrap; text-underline-offset: 1px; }
.menu .current { width: 126px; border-top: 5px solid #225f6b; background: #39a7bc; color: #fff; line-height: 62px; text-decoration: none; }
.contacts { height: 324px; flex: none; display: flex; justify-content: center; padding-top: 37px; }
.card { width: 390px; display: flex; flex-direction: column; align-items: center; text-align: center; font-size: 14px; line-height: 20px; color: #999; }
.ring { width: 80px; height: 80px; border: 1px solid #39a7bc; border-radius: 50%; display: flex; justify-content: center; padding-top: 25px; fill: #39a7bc; }
.card h4 { margin: 24px 0 23px; font-size: 18px; line-height: 20px; font-weight: 700; letter-spacing: 1.45px; color: #555; }
.card p { margin: 0 0 10px; }
.hang { padding-right: 3px; }
.card a { color: #39a7bc; text-decoration: none; }

/* map */
.map { position: relative; height: 287px; background: #f7f7f7; overflow: hidden; }
.park { fill: #e2e2e2; }
.park2 { fill: #e9e9e9; }
.campus { fill: #efefef; }
.pale { fill: #fafafa; }
.land { fill: #f7f7f7; }
.water { fill: #9e9f98; }
.minor { fill: none; stroke: #fff; stroke-width: 4; stroke-linejoin: round; }
.road { fill: none; stroke: #fff; stroke-linejoin: round; }
.rail { fill: none; stroke: #d6d6d6; stroke-width: 4; }
.ring-rd { fill: none; stroke: #dadada; stroke-width: 25; }
.loop { fill: none; stroke: #dadada; stroke-width: 9; }
.loopf { fill: #dadada; }
.edge { fill: none; stroke: #cfcfcf; stroke-width: 3; }
.map text { font-family: Roboto, sans-serif; stroke: #fff; stroke-opacity: .85; stroke-width: 2.5px; paint-order: stroke; stroke-linejoin: round; }
.brown text { font-size: 12.8px; font-weight: 500; fill: #8d7a54; }
.brown .b14 { font-size: 14.2px; }
.brown .b15 { font-size: 15.5px; }
.grey text { font-size: 12.4px; fill: #939393; }
.grey .dk { fill: #777; font-size: 11.5px; }
.grey .s10 { font-size: 10.5px; }
.grey .s11 { font-size: 10.8px; }
.grey .uni { font-size: 17.5px; font-weight: 500; fill: #b9b9b9; }
.grey .river { font-size: 13px; fill: #686963; stroke: none; }
.map .ital text { font-size: 10.5px; font-style: italic; fill: #777; }
.poi { fill: none; stroke: #999; stroke-width: 1; }
.map .goog { font-size: 19px; font-weight: 500; fill: #fff; stroke: #aaa; stroke-width: 2px; }
.zoom { position: absolute; left: 10px; top: 10px; width: 28px; height: 55px; padding: 0 4px; border-radius: 2px; background: #fff; box-shadow: 0 1px 3px rgba(0,0,0,.15); display: flex; flex-direction: column; }
.zbtn { flex: 1; padding: 0; border: 0; background: linear-gradient(#666, #666) center / 10px 2.500px no-repeat; }
.zbtn.plus { background: linear-gradient(#666, #666) center / 10px 2.500px no-repeat, linear-gradient(#666, #666) center / 2.500px 10px no-repeat; box-shadow: 0 1px #e6e6e6; }

/* scrollbar */
.scrollbar { width: 15px; flex: none; display: flex; flex-direction: column; align-items: center; background: #f1f1f1; }
.arr { border: 4px solid transparent; }
.up { margin-top: 2px; border-bottom-color: #505050; }
.thumb { width: 11px; height: 315px; margin-top: 167px; background: #a8a8a8; }
.down { margin: auto 0 2px; border-top-color: #505050; }
```
